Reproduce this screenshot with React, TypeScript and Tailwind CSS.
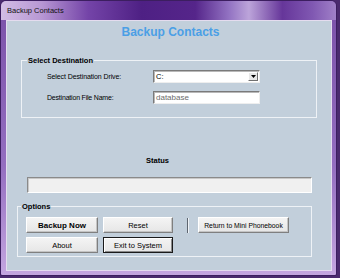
const frameFont = "font-['Liberation_Sans',Arial,sans-serif]";

function Btn({
  children,
  w,
  bold,
  isDefault,
  small,
}: {
  children: string;
  w: string;
  bold?: boolean;
  isDefault?: boolean;
  small?: boolean;
}) {
  return (
    <div
      className={
        "h-[16px] flex items-center justify-center leading-[9px] text-black bg-[linear-gradient(#f4f4f4,#e6e6e6)] " +
        w +
        (bold ? " font-bold text-[8px]" : small ? " text-[6.8px]" : " text-[7.5px]") +
        (isDefault
          ? " border border-[#1a1a1a] shadow-[inset_1px_1px_0_#ffffff,inset_-1px_-1px_0_#8a8a8a]"
          : " border-t border-l border-t-white border-l-white border-b border-r border-b-[#7f7f7f] border-r-[#7f7f7f] shadow-[inset_-1px_-1px_0_#c4c4c4]")
      }
    >
      {children}
    </div>
  );
}

function Sunken({ className, children }: { className: string; children?: React.ReactNode }) {
  return (
    <div
      className={
        "bg-white border-t border-l border-t-[#7a7a7a] border-l-[#7a7a7a] border-b border-r border-b-[#eeeeee] border-r-[#eeeeee] shadow-[inset_1px_1px_0_#b8b8b8] " +
        className
      }
    >
      {children}
    </div>
  );
}

export default function App() {
  return (
    <div className={"w-[340px] h-[278px] bg-[#4a2a6e] overflow-hidden " + frameFont}>
      <div className="w-[337px] h-[276px] rounded-t-[6px] rounded-b-[2px] bg-[linear-gradient(180deg,#7a50a8,#946ec0_60%,#c4a6e0)] flex flex-col border border-[#3c1e60]">
        {/* title bar */}
        <div className="h-[19px] shrink-0 rounded-t-[5px] flex items-center pl-[6px] bg-[linear-gradient(90deg,#d2bde4_0%,#b898d4_12%,#7444a8_26%,#4e2084_42%,#55258a_58%,#9272c2_68%,#bca4da_74%,#66369a_84%,#8058b2_93%,#a080c8_100%)]">
          <span className="text-[7.5px] leading-[9px] text-[#111]">Backup Contacts</span>
        </div>

        {/* client area */}
        <div className="ml-[5px] w-[326px] h-[251px] border border-[#e4dcef] bg-[#c2cfdb] flex flex-col items-start">
          <div className="self-center ml-[3px] mt-[4px] text-[12px] leading-[14px] font-bold text-[#4b9fe6]">
            Backup Contacts
          </div>

          <fieldset className="mt-[17px] ml-[14px] w-[296px] h-[62px] border border-[#eef2f6] pl-[5px]">
            <legend className="px-[1px] text-[7.5px] leading-[9px] font-bold text-black">Select Destination</legend>
            <div className="mt-[5px] flex items-center">
              <div className="ml-[20px] w-[106px] text-[7px] leading-[9px] tracking-[-0.1px] text-black">Select Destination Drive:</div>
              <Sunken className="w-[107px] h-[13px] flex items-center justify-between pl-[2px] pr-[1px]">
                <span className="text-[7.5px] leading-[9px] text-black">C:</span>
                <div className="w-[10px] h-[9px] bg-[#e8e8e8] border-t border-l border-t-white border-l-white border-b border-r border-b-[#707070] border-r-[#707070] flex items-center justify-center">
                  <svg width="5" height="3" viewBox="0 0 5 3">
                    <path d="M0 0h5L2.5 3z" fill="#000" />
                  </svg>
                </div>
              </Sunken>
            </div>
            <div className="mt-[8px] flex items-center">
              <div className="ml-[20px] w-[106px] text-[7px] leading-[9px] tracking-[-0.2px] text-black">Destination File Name:</div>
              <Sunken className="w-[107px] h-[13px] flex items-center pl-[2px]">
                <span className="text-[8px] leading-[9px] text-[#6c6c6c]">database</span>
              </Sunken>
            </div>
          </fieldset>

          <div className="mt-[38px] ml-[139px] text-[7.5px] leading-[9px] font-bold text-black">Status</div>
          <div className="mt-[12px] ml-[20px] w-[285px] h-[16px] bg-[#f0f0f0] border-t border-l border-t-[#8a8a8a] border-l-[#8a8a8a] border-b border-r border-b-white border-r-white shadow-[inset_1px_1px_0_#c8c8c8]" />

          <fieldset className="mt-[9px] ml-[10px] w-[295px] h-[55px] border border-[#eef2f6] pl-[3px]">
            <legend className="px-[1px] text-[7.5px] leading-[9px] font-bold text-black">Options</legend>
            <div className="mt-[6px] ml-[5px] flex items-center">
              <Btn w="w-[72px]" bold>
                Backup Now
              </Btn>
              <div className="ml-[5px]">
                <Btn w="w-[70px]">Reset</Btn>
              </div>
              <div className="ml-[14px] w-[2px] h-[15px] border-l border-l-[#5e6670] border-r border-r-[#eef2f6]" />
              <div className="ml-[9px]">
                <Btn w="w-[91px]" small>
                  Return to Mini Phonebook
                </Btn>
              </div>
            </div>
            <div className="mt-[4px] ml-[5px] flex items-center">
              <Btn w="w-[72px]">About</Btn>
              <div className="ml-[5px]">
                <Btn w="w-[70px]" isDefault>
                  Exit to System
                </Btn>
              </div>
            </div>
          </fieldset>
        </div>
      </div>
    </div>
  );
}
